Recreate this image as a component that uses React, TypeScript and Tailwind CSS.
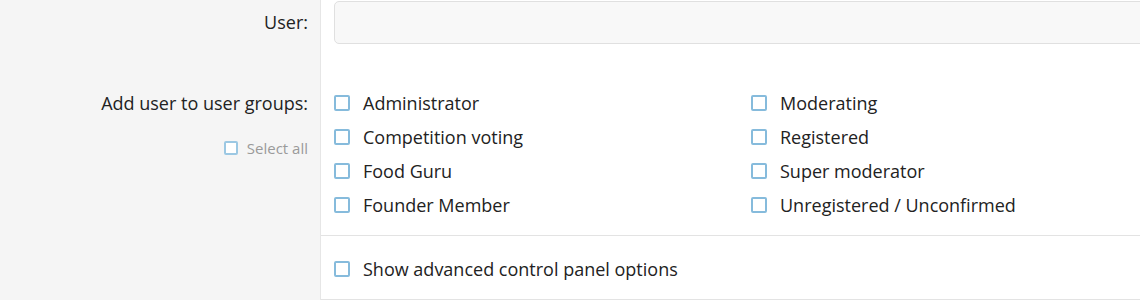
import React from 'react';

const leftGroups = ['Administrator', 'Competition voting', 'Food Guru', 'Founder Member'];
const rightGroups = ['Moderating', 'Registered', 'Super moderator', 'Unregistered / Unconfirmed'];

function Box({ small = false }: { small?: boolean }) {
  return (
    <span
      className={
        small
          ? 'inline-block w-[14px] h-[14px] shrink-0 rounded-[2px] border-2 border-[#9cc8e3] bg-white'
          : 'inline-block w-4 h-4 shrink-0 rounded-[2px] border-2 border-[#86bbdc] bg-white'
      }
    />
  );
}

function CheckRow({ label }: { label: string }) {
  return (
    <label className="flex items-center h-[34px] gap-[13px] text-[18px] text-[#222] cursor-pointer">
      <Box />
      <span>{label}</span>
    </label>
  );
}

export default function App() {
  return (
    <div
      className="w-[1140px] h-[300px] overflow-hidden bg-white"
      style={{ fontFamily: '"Segoe UI", "Open Sans", "Noto Sans", sans-serif' }}
    >
      {/* User row */}
      <div className="flex">
        <div className="w-[321px] shrink-0 bg-[#f5f5f5] border-r border-[#e6e6e6] h-[44px] flex items-center justify-end pr-[12px] text-[18px] text-[#222]">
          User:
        </div>
        <div className="flex-1 pl-[13px] pt-px">
          <div className="h-[43px] rounded-[5px] border border-[#e0e0e0] bg-[#f8f8f8] -mr-4" />
        </div>
      </div>

      {/* Groups row */}
      <div className="flex">
        <div className="w-[321px] shrink-0 bg-[#f5f5f5] border-r border-[#e6e6e6] pt-[42px] pr-[12px] flex flex-col items-end">
          <div className="h-[34px] flex items-center text-[18px] text-[#222]">Add user to user groups:</div>
          <label className="mt-[17px] flex items-center gap-[9px] text-[15px] text-[#9a9a9a]">
            <Box small />
            <span>Select all</span>
          </label>
        </div>
        <div className="flex-1 pt-[42px] pb-[13px] pl-[13px] border-b border-[#e3e3e3]">
          <div className="grid grid-cols-[417px_1fr]">
            <div>
              {leftGroups.map((g) => (
                <CheckRow key={g} label={g} />
              ))}
            </div>
            <div>
              {rightGroups.map((g) => (
                <CheckRow key={g} label={g} />
              ))}
            </div>
          </div>
        </div>
      </div>

      {/* Advanced options row */}
      <div className="flex">
        <div className="w-[321px] shrink-0 bg-[#f5f5f5] border-r border-[#e6e6e6] h-[64px]" />
        <div className="flex-1 pt-4 pb-3 pl-[13px] border-b border-[#e3e3e3]">
          <CheckRow label="Show advanced control panel options" />
        </div>
      </div>
    </div>
  );
}
